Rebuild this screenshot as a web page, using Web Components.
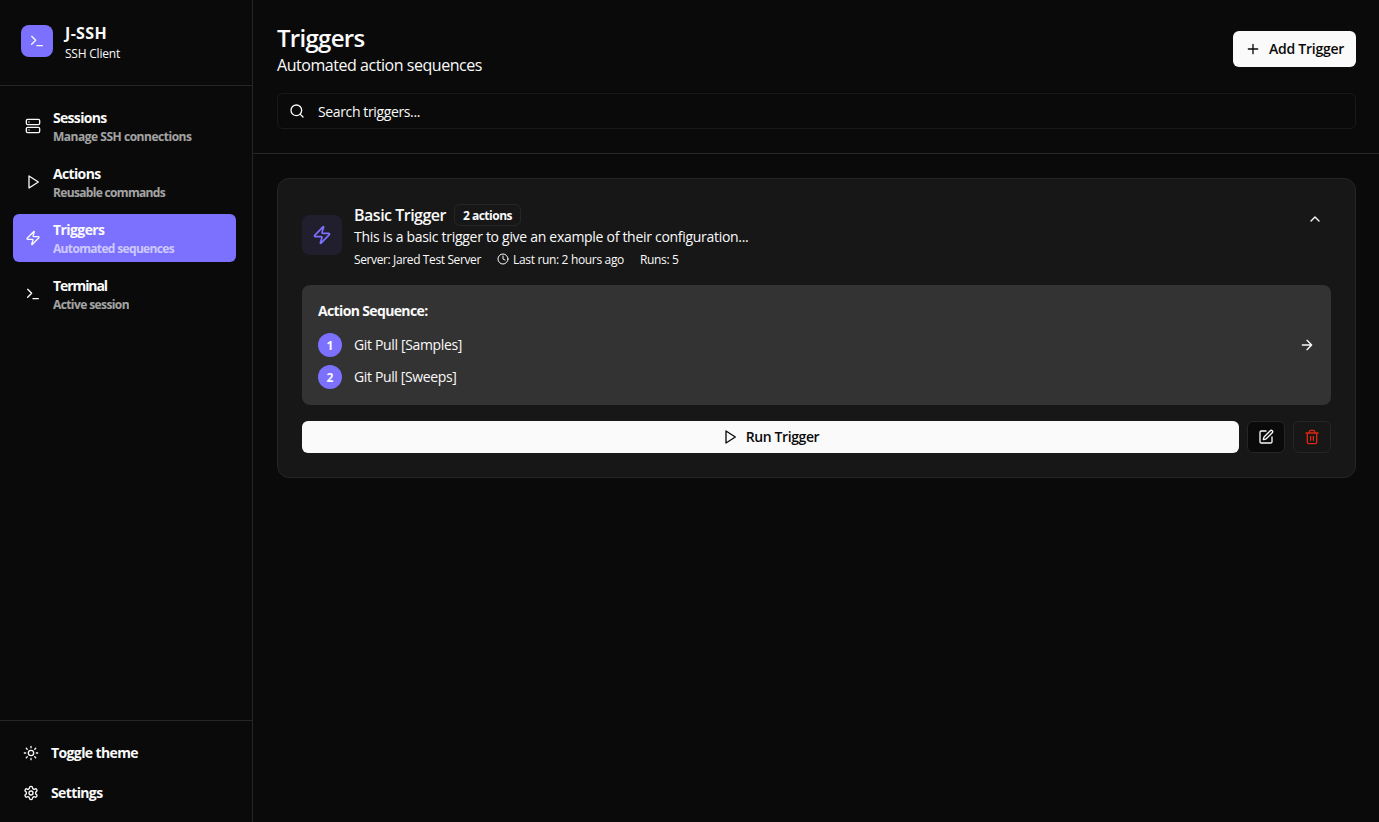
<!DOCTYPE html>
<html lang="en">
<head>
<meta charset="utf-8">
<title>J-SSH</title>
<style>
html, body { margin: 0; height: 100%; background: #0a0a0a; overflow: hidden; }
body { font-family: "Open Sans", "Noto Sans", sans-serif; color: #fafafa; }
</style>
</head>
<body>
<ssh-app></ssh-app>
<script>
const ICONS = {
  terminal: '<path d="m4 17 6-6-6-6"/><path d="M12 19h8"/>',
  server: '<rect width="20" height="8" x="2" y="2" rx="2"/><rect width="20" height="8" x="2" y="14" rx="2"/><path d="M6 6h.01"/><path d="M6 18h.01"/>',
  play: '<path d="m6 3 14 9-14 9z"/>',
  zap: '<path d="M4 14a1 1 0 0 1-.78-1.63l9.9-10.2a.5.5 0 0 1 .86.46l-1.92 6.02A1 1 0 0 0 13 10h7a1 1 0 0 1 .78 1.63l-9.9 10.2a.5.5 0 0 1-.86-.46l1.92-6.02A1 1 0 0 0 11 14z"/>',
  sun: '<circle cx="12" cy="12" r="4"/><path d="M12 2v2M12 20v2M4.93 4.93l1.41 1.41M17.66 17.66l1.41 1.41M2 12h2M20 12h2M6.34 17.66l-1.41 1.41M19.07 4.93l-1.41 1.41"/>',
  settings: '<path d="M12.22 2h-.44a2 2 0 0 0-2 2v.18a2 2 0 0 1-1 1.73l-.43.25a2 2 0 0 1-2 0l-.15-.08a2 2 0 0 0-2.73.73l-.22.38a2 2 0 0 0 .73 2.73l.15.1a2 2 0 0 1 1 1.72v.51a2 2 0 0 1-1 1.74l-.15.09a2 2 0 0 0-.73 2.73l.22.38a2 2 0 0 0 2.73.73l.15-.08a2 2 0 0 1 2 0l.43.25a2 2 0 0 1 1 1.73V20a2 2 0 0 0 2 2h.44a2 2 0 0 0 2-2v-.18a2 2 0 0 1 1-1.73l.43-.25a2 2 0 0 1 2 0l.15.08a2 2 0 0 0 2.73-.73l.22-.39a2 2 0 0 0-.73-2.73l-.15-.08a2 2 0 0 1-1-1.74v-.5a2 2 0 0 1 1-1.74l.15-.09a2 2 0 0 0 .73-2.73l-.22-.38a2 2 0 0 0-2.73-.73l-.15.08a2 2 0 0 1-2 0l-.43-.25a2 2 0 0 1-1-1.73V4a2 2 0 0 0-2-2z"/><circle cx="12" cy="12" r="3"/>',
  search: '<circle cx="11" cy="11" r="8"/><path d="m21 21-4.3-4.3"/>',
  plus: '<path d="M5 12h14M12 5v14"/>',
  clock: '<circle cx="12" cy="12" r="10"/><path d="M12 6v6l4 2"/>',
  up: '<path d="m18 15-6-6-6 6"/>',
  arrow: '<path d="M5 12h14M12 5l7 7-7 7"/>',
  edit: '<path d="M12 3H5a2 2 0 0 0-2 2v14a2 2 0 0 0 2 2h14a2 2 0 0 0 2-2v-7"/><path d="M18.375 2.625a1 1 0 0 1 3 3l-9.013 9.014a2 2 0 0 1-.853.505l-2.873.84a.5.5 0 0 1-.62-.62l.84-2.873a2 2 0 0 1 .506-.852z"/>',
  trash: '<path d="M3 6h18M19 6v14a2 2 0 0 1-2 2H7a2 2 0 0 1-2-2V6M8 6V4a2 2 0 0 1 2-2h4a2 2 0 0 1 2 2v2M10 11v6M14 11v6"/>'
};

const define = (name, html, setup) => {
  const template = document.createElement('template');
  template.innerHTML = html;
  customElements.define(name, class extends HTMLElement {
    connectedCallback() {
      if (this.shadowRoot) return;
      this.attachShadow({ mode: 'open' }).append(template.content.cloneNode(true));
      if (setup) setup(this, this.shadowRoot);
    }
  });
};

// <ui-icon name size>: 24-unit stroke icon
define('ui-icon', `
<style>:host{display:block;flex:none;line-height:0}svg{display:block;fill:none;stroke:currentColor;stroke-width:2;stroke-linecap:round;stroke-linejoin:round}</style>
<svg viewBox="0 0 24 24"></svg>`, (el, root) => {
  const svg = root.querySelector('svg');
  const size = el.getAttribute('size') || 16;
  svg.setAttribute('width', size);
  svg.setAttribute('height', size);
  svg.innerHTML = ICONS[el.getAttribute('name')];
});

// <ui-text w low>: one line of text, tracked so that it sets to w pixels;
// "low" drops the baseline by one pixel inside the same line box
define('ui-text', `
<style>:host{display:block;white-space:nowrap}span{display:inline-block;vertical-align:top}:host([low]) span{margin:1px 0 -1px}</style>
<span><slot></slot></span>`, (el, root) => {
  const span = root.querySelector('span');
  const target = parseFloat(el.getAttribute('w'));
  const track = () => {
    span.style.letterSpacing = '0px';
    const n = el.textContent.trim().length;
    const natural = span.getBoundingClientRect().width;
    if (!natural || !target) return;
    span.style.letterSpacing = ((target - natural) / n).toFixed(3) + 'px';
  };
  requestAnimationFrame(track);
  track();
});

define('ssh-nav-item', `
<style>
:host{display:flex;align-items:center;gap:12px;height:48px;padding:0 12px;box-sizing:border-box;border-radius:6px}
:host([active]){background:#7c71ff}
.t{font:700 14px/20px "Open Sans",sans-serif}
.s{font:700 12px/16px "Open Sans",sans-serif;opacity:.64}
</style>
<ui-icon></ui-icon><div><div class="t"><slot name="title"></slot></div><div class="s"><slot name="sub"></slot></div></div>`,
(el, root) => {
  const icon = document.createElement('ui-icon');
  icon.setAttribute('name', el.getAttribute('icon'));
  root.querySelector('ui-icon').replaceWith(icon);
});

define('ssh-sidebar', `
<style>
:host{display:flex;flex-direction:column;width:253px;flex:none;box-sizing:border-box;border-right:1px solid #262626}
header{display:flex;align-items:center;gap:12px;padding:21px 21px 24px;height:40px;border-bottom:1px solid #262626}
.logo{width:32px;height:32px;border-radius:8px;background:#7c71ff;display:grid;place-items:center}
.name{font-size:16px;line-height:24px;font-weight:700}
.kind{font-size:12px;line-height:16px}
nav{flex:1;display:flex;flex-direction:column;gap:8px;padding:16px 16px 0 13px}
footer{border-top:1px solid #262626;padding:16px 16px 13px 13px;display:flex;flex-direction:column;gap:8px}
.row{display:flex;align-items:center;gap:12px;height:32px;padding-left:10px;font-size:14px;line-height:20px;font-weight:700}
</style>
<header><div class="logo"><ui-icon name="terminal"></ui-icon></div>
<div><ui-text class="name" w="42">J-SSH</ui-text><ui-text low class="kind" w="55">SSH Client</ui-text></div></header>
<nav>
<ssh-nav-item icon="server"><ui-text slot="title" w="53.5">Sessions</ui-text><ui-text low slot="sub" w="138.5">Manage SSH connections</ui-text></ssh-nav-item>
<ssh-nav-item icon="play"><ui-text slot="title" w="47.5">Actions</ui-text><ui-text low slot="sub" w="112">Reusable commands</ui-text></ssh-nav-item>
<ssh-nav-item icon="zap" active><ui-text slot="title" w="51.5">Triggers</ui-text><ui-text low slot="sub" w="121">Automated sequences</ui-text></ssh-nav-item>
<ssh-nav-item icon="terminal"><ui-text slot="title" w="54">Terminal</ui-text><ui-text low slot="sub" w="76">Active session</ui-text></ssh-nav-item>
</nav>
<footer>
<div class="row"><ui-icon name="sun"></ui-icon><ui-text w="87">Toggle theme</ui-text></div>
<div class="row"><ui-icon name="settings"></ui-icon><ui-text w="51.5">Settings</ui-text></div>
</footer>`);

define('ui-button', `
<style>
:host{display:flex;align-items:center;justify-content:center;gap:8px;height:32px;box-sizing:border-box;border-radius:6px;font-size:14px;line-height:20px;font-weight:600}
:host([kind=solid]){background:#fafafa;color:#0a0a0a}
:host([kind=outline]){width:38px;border:1px solid #262626;background:#0a0a0a}
:host([kind=danger]){width:38px;border:1px solid #262626;color:#dc2612}
:host([kind=ghost]){width:32px}
</style><slot></slot>`);

define('ssh-step', `
<style>
:host{display:flex;align-items:center;gap:12px;height:24px;font-size:14px;line-height:20px}
.n{width:24px;height:24px;border-radius:50%;background:#7c71ff;display:grid;place-items:center;font-size:12px;line-height:16px;font-weight:700}
.label{flex:1}
</style><div class="n"><slot name="n"></slot></div><div class="label"><slot></slot></div><slot name="end"></slot>`);

define('ssh-trigger-card', `
<style>
:host{display:block;box-sizing:border-box;height:300px;padding:24px;border:1px solid #262626;border-radius:12px;background:#171717}
.head{display:flex;align-items:flex-start;height:64px}
.badge-icon{align-self:center;width:40px;height:40px;border-radius:8px;background:#211f2e;color:#7c71ff;display:grid;place-items:center;margin-right:12px}
.info{flex:1}
.title{display:flex;align-items:center;gap:8px;height:24px;font-size:16px;line-height:24px;font-weight:600}
.badge{box-sizing:border-box;height:22px;width:67px;display:grid;place-items:center;border:1px solid #262626;border-radius:6px;font-size:12px;line-height:16px;font-weight:700}
.desc{font-size:14px;line-height:20px}
.meta{display:flex;gap:16px;margin-top:4px;font-size:12px;line-height:16px}
.run{display:flex;align-items:center;gap:4px}
.seq{box-sizing:border-box;height:120px;margin-top:18px;padding:16px;border-radius:8px;background:#333;display:flex;flex-direction:column;gap:8px}
.seq-title{font-size:14px;line-height:20px;font-weight:700;margin-bottom:4px}
.actions{display:flex;gap:8px;margin-top:16px}
.actions ui-button:first-child{flex:1}
</style>
<div class="head">
<div class="badge-icon"><ui-icon name="zap" size="20"></ui-icon></div>
<div class="info">
<div class="title"><ui-text w="92">Basic Trigger</ui-text><div class="badge"><ui-text low w="49">2 actions</ui-text></div></div>
<ui-text class="desc" w="394.5">This is a basic trigger to give an example of their configuration...</ui-text>
<div class="meta"><ui-text low w="127">Server: Jared Test Server</ui-text><div class="run"><ui-icon name="clock" size="12"></ui-icon><ui-text low w="111">Last run: 2 hours ago</ui-text></div><ui-text low w="38.5">Runs: 5</ui-text></div>
</div>
<ui-button kind="ghost"><ui-icon name="up"></ui-icon></ui-button>
</div>
<div class="seq">
<ui-text class="seq-title" w="109.5">Action Sequence:</ui-text>
<ssh-step><ui-text low slot="n">1</ui-text><ui-text w="108">Git Pull [Samples]</ui-text><ui-icon slot="end" name="arrow"></ui-icon></ssh-step>
<ssh-step><ui-text low slot="n">2</ui-text><ui-text w="102.5">Git Pull [Sweeps]</ui-text></ssh-step>
</div>
<div class="actions">
<ui-button kind="solid"><ui-icon name="play"></ui-icon><ui-text w="73.5">Run Trigger</ui-text></ui-button>
<ui-button kind="outline"><ui-icon name="edit"></ui-icon></ui-button>
<ui-button kind="danger"><ui-icon name="trash"></ui-icon></ui-button>
</div>`);

define('ssh-main', `
<style>
:host{display:block;flex:1}
header{padding:21px 23px 24px 24px;border-bottom:1px solid #262626}
.top{display:flex;justify-content:space-between;align-items:center;height:56px}
.h{font-size:24px;line-height:32px;font-weight:600}
.sub{font-size:16px;line-height:24px}
.add{width:123px;height:36px}
.search{box-sizing:border-box;height:36px;margin-top:16px;border:1px solid #191919;border-radius:6px;padding:0 11px;display:flex;align-items:center;gap:13px;font-size:14px;line-height:20px}
.search ui-icon{margin-top:-1px}
.list{padding:24px 23px 0 24px}
</style>
<header>
<div class="top"><div><ui-text low class="h" w="87.5">Triggers</ui-text><ui-text class="sub" w="205">Automated action sequences</ui-text></div>
<ui-button class="add" kind="solid"><ui-icon name="plus"></ui-icon><ui-text w="75">Add Trigger</ui-text></ui-button></div>
<div class="search"><ui-icon name="search"></ui-icon><ui-text low w="102">Search triggers...</ui-text></div>
</header>
<div class="list"><ssh-trigger-card></ssh-trigger-card></div>`);

define('ssh-app', `
<style>:host{display:flex;height:100vh;background:#0a0a0a}</style>
<ssh-sidebar></ssh-sidebar><ssh-main></ssh-main>`);
</script>
</body>
</html>
